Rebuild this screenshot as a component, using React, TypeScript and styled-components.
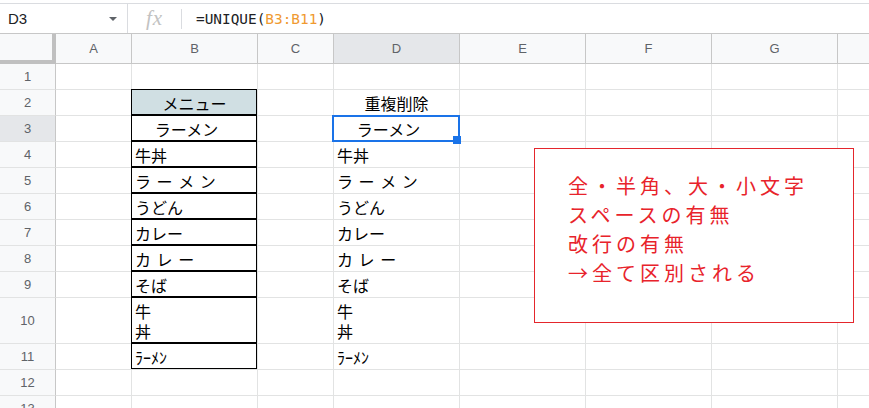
import React from 'react';
import styled, { createGlobalStyle, css } from 'styled-components';

const GlobalStyle = createGlobalStyle`
  html, body { margin: 0; padding: 0; background: #fff; }
  body {
    width: 869px;
    height: 408px;
    overflow: hidden;
    font-family: "Liberation Sans", Arial, sans-serif;
  }
`;

const Page = styled.div`
  position: relative;
  width: 869px;
  height: 408px;
  overflow: hidden;
  background: #fff;
`;

const FormulaBar = styled.div`
  margin-top: 3px;
  height: 31px;
  box-sizing: border-box;
  border-top: 1px solid #dadce0;
  border-bottom: 1px solid #c7c7c7;
  display: flex;
  align-items: center;
`;

const NameBox = styled.div`
  width: 128px;
  height: 100%;
  box-sizing: border-box;
  border-right: 1px solid #dadce0;
  display: flex;
  align-items: center;
  justify-content: space-between;
  padding: 0 10px 0 8px;
  font-size: 15px;
  color: #202124;
`;

const Caret = styled.span`
  width: 0;
  height: 0;
  border-left: 4px solid transparent;
  border-right: 4px solid transparent;
  border-top: 4px solid #5f6368;
`;

const FxBox = styled.div`
  width: 53px;
  display: flex;
  justify-content: center;
  align-items: center;
  font-family: "Liberation Serif", serif;
  font-style: italic;
  font-size: 21px;
  color: #c2c2c2;
  letter-spacing: 1px;
`;

const Divider = styled.span`
  width: 1px;
  height: 20px;
  background: #dadce0;
`;

const FormulaText = styled.div`
  padding-left: 14px;
  font-family: "DejaVu Sans Mono", "Liberation Mono", monospace;
  font-size: 14.4px;
  color: #202124;
  white-space: pre;
`;

const RangeRef = styled.span`
  color: #f09a30;
`;

const Sheet = styled.div`
  display: grid;
  grid-template-columns: 56px 76px 126px 76px 126px 126px 126px 126px 126px;
  grid-template-rows: 30px repeat(9, 26px) 46px 26px 26px 26px;
  width: max-content;
`;

const Corner = styled.div`
  box-sizing: border-box;
  background: #f8f9fa;
  border-right: 4px solid #c0c0c0;
  border-bottom: 4px solid #c0c0c0;
`;

const HeaderBase = css<{ $active?: boolean }>`
  box-sizing: border-box;
  display: flex;
  align-items: center;
  justify-content: center;
  background: ${p => (p.$active ? '#e5e7ea' : '#f8f9fa')};
  font-family: "Liberation Sans", Arial, sans-serif;
  font-size: 13px;
  color: #5f6368;
`;

const ColHeader = styled.div<{ $active?: boolean }>`
  ${HeaderBase};
  border-right: 1px solid #c7c7c7;
  border-bottom: 1px solid #c7c7c7;
`;

const RowHeader = styled.div<{ $active?: boolean }>`
  ${HeaderBase};
  border-right: 1px solid #c7c7c7;
  border-bottom: 1px solid #e2e3e3;
`;

const Cell = styled.div<{
  $align?: 'left' | 'center';
  $boxed?: boolean;
  $fill?: string;
  $selected?: boolean;
}>`
  position: relative;
  box-sizing: border-box;
  border-right: 1px solid #e2e3e3;
  border-bottom: 1px solid #e2e3e3;
  background: ${p => p.$fill ?? '#fff'};
  display: flex;
  align-items: flex-end;
  justify-content: ${p => (p.$align === 'center' ? 'center' : 'flex-start')};
  padding: 0 3px 2px;
  font-family: "Noto Sans CJK JP", sans-serif;
  font-size: 16px;
  line-height: 20px;
  word-spacing: 2px;
  white-space: pre;
  color: #000;

  ${p =>
    p.$boxed &&
    css`
      &::before {
        content: '';
        position: absolute;
        top: -1px;
        left: -1px;
        right: 0;
        bottom: 0;
        border: 1px solid #000;
        pointer-events: none;
      }
    `}

  ${p =>
    p.$selected &&
    css`
      &::after {
        content: '';
        position: absolute;
        top: -1px;
        left: -2px;
        right: -1px;
        bottom: -1px;
        border: 2px solid #1a73e8;
        pointer-events: none;
      }
    `}
`;

const FillHandle = styled.span`
  position: absolute;
  right: -2px;
  bottom: -3px;
  width: 8px;
  height: 8px;
  background: #1a73e8;
  z-index: 2;
`;

const Callout = styled.div`
  position: absolute;
  left: 534px;
  top: 148px;
  width: 320px;
  height: 175px;
  box-sizing: border-box;
  border: 1px solid #e4262c;
  background: #fff;
  padding: 22px 0 0 33px;
  font-family: "Noto Sans CJK JP", sans-serif;
  font-size: 20px;
  line-height: 29px;
  letter-spacing: 4px;
  color: #e8232b;
`;

const CalloutLine = styled.div`
  white-space: nowrap;
`;

type CellData = {
  text?: string;
  align?: 'left' | 'center';
  boxed?: boolean;
  fill?: string;
  selected?: boolean;
};

const COLS = ['A', 'B', 'C', 'D', 'E', 'F', 'G', 'H'];
// The H column letter lies beyond the window's right edge.
const VISIBLE_LABELS = new Set(['A', 'B', 'C', 'D', 'E', 'F', 'G']);

const box = (text: string, align: 'left' | 'center' = 'left', fill?: string): CellData => ({
  text,
  align,
  boxed: true,
  fill,
});

const ROWS: { n: number; cells: Record<string, CellData> }[] = [
  { n: 1, cells: {} },
  {
    n: 2,
    cells: {
      B: box('メニュー', 'center', '#d0dfe3'),
      D: { text: '重複削除', align: 'center' },
    },
  },
  {
    n: 3,
    cells: {
      B: box('ラーメン\u3000', 'center'),
      D: { text: 'ラーメン\u3000', align: 'center', selected: true },
    },
  },
  { n: 4, cells: { B: box('牛丼'), D: { text: '牛丼' } } },
  { n: 5, cells: { B: box('ラ ー メ ン'), D: { text: 'ラ ー メ ン' } } },
  { n: 6, cells: { B: box('うどん'), D: { text: 'うどん' } } },
  { n: 7, cells: { B: box('カレー'), D: { text: 'カレー' } } },
  { n: 8, cells: { B: box('カ レ ー'), D: { text: 'カ レ ー' } } },
  { n: 9, cells: { B: box('そば'), D: { text: 'そば' } } },
  { n: 10, cells: { B: box('牛\n丼'), D: { text: '牛\n丼' } } },
  { n: 11, cells: { B: box('ﾗｰﾒﾝ'), D: { text: 'ﾗｰﾒﾝ' } } },
  { n: 12, cells: {} },
  { n: 13, cells: {} },
];

const NOTES = ['全・半角、大・小文字', 'スペースの有無', '改行の有無', '→全て区別される'];

export default function App() {
  return (
    <>
      <GlobalStyle />
      <Page>
        <FormulaBar>
          <NameBox>
            <span>D3</span>
            <Caret />
          </NameBox>
          <FxBox>fx</FxBox>
          <Divider />
          <FormulaText>
            =UNIQUE(<RangeRef>B3:B11</RangeRef>)
          </FormulaText>
        </FormulaBar>
        <Sheet>
          <Corner />
          {COLS.map(c => (
            <ColHeader key={c} $active={c === 'D'}>
              {VISIBLE_LABELS.has(c) ? c : ''}
            </ColHeader>
          ))}
          {ROWS.map(row => (
            <React.Fragment key={row.n}>
              <RowHeader $active={row.n === 3}>{row.n}</RowHeader>
              {COLS.map(c => {
                const d = row.cells[c] ?? {};
                return (
                  <Cell
                    key={c}
                    $align={d.align}
                    $boxed={d.boxed}
                    $fill={d.fill}
                    $selected={d.selected}
                  >
                    {d.text}
                    {d.selected && <FillHandle />}
                  </Cell>
                );
              })}
            </React.Fragment>
          ))}
        </Sheet>
        <Callout>
          {NOTES.map(line => (
            <CalloutLine key={line}>{line}</CalloutLine>
          ))}
        </Callout>
      </Page>
    </>
  );
}
